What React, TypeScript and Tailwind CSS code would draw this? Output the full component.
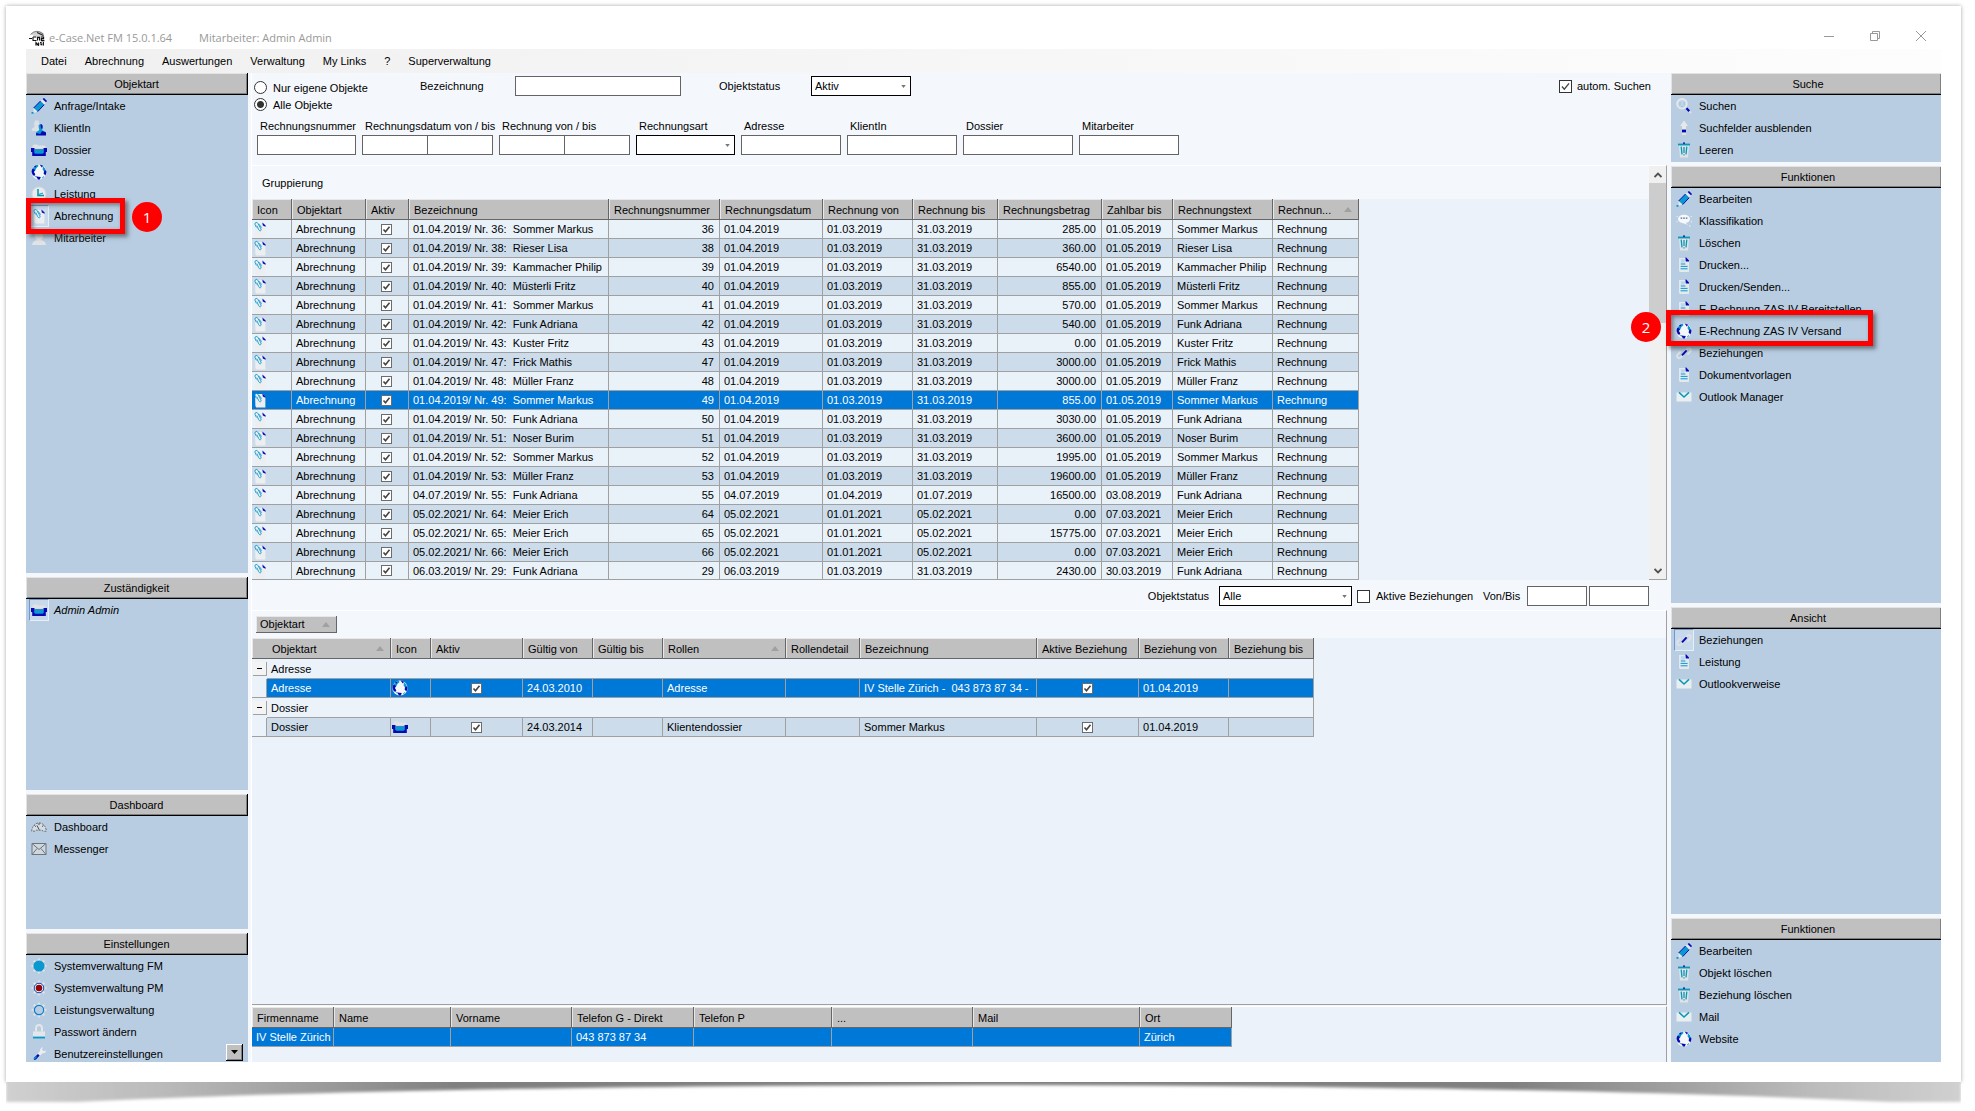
import React from "react";
import clsx from "clsx";

type IconName =
  | "pencil" | "person" | "box" | "globe" | "clock" | "clip" | "staff" | "gauge" | "envelope"
  | "gearBlue" | "gearRed" | "gearRing" | "lock" | "wrench" | "search" | "arrowUp" | "trash"
  | "speech" | "doc" | "link" | "mail";

const gearTeeth = (
  <path
    d="M8 0.5v15M0.5 8h15M2.7 2.7l10.6 10.6M13.3 2.7L2.7 13.3"
    stroke="#dfe0e2"
    strokeWidth="2.4"
  />
);

const drawings: Record<IconName, React.ReactNode> = {
  pencil: (
    <>
      <path d="M9.5 3l3.8 3.6-6.6 7L2.6 10z" fill="#0a98d0" />
      <path d="M9.5 3L2.6 10M13.3 6.6l-6.6 7" stroke="#0508b4" strokeWidth="1" />
      <path d="M9.7 2.8l1.6-1.3 3.6 3.4-1.5 1.6z" fill="#e8e8e8" />
      <path d="M11.6 1L13 0l3 3-1 1.3z" fill="#0508b4" />
      <path d="M2.6 10l3.6 3.5L2.6 15z" fill="#e8e8e8" />
      <path d="M0.5 14h2v1.8h-2z" fill="#0a98d0" />
    </>
  ),
  person: (
    <>
      <path d="M4 0.5h3.5l1 4-1 3.5 1 3H0.5l0.5-2.5 2.5-1.5L3 4z" fill="#dcdfe3" />
      <path d="M7.5 5.5Q9.5 3 11.5 5.5v3L11 10l4 2.2V15H5v-2.5L8.3 10z" fill="#0a98d0" />
      <path d="M9.5 4Q11 4 11.5 5.5v3H10zM11 11l4 1.6V15.5H5L5.3 13l4 1z" fill="#0508b4" />
    </>
  ),
  box: (
    <>
      <path d="M1.5 6V3.8L3 2.6h3l1 0.8h6l1.5 1V6z" fill="#e1e2e4" />
      <path d="M0 6h16v4h-1.2v4H1.2v-4H0z" fill="#0508b4" />
      <path d="M3.6 6h8.8l0.4 1.6H3.2z" fill="#d2dae2" />
      <path d="M3.2 7.6h9.6v3.2l-1.2 1H4.4l-1.2-1z" fill="#0a98d0" />
    </>
  ),
  globe: (
    <>
      <circle cx="8" cy="8" r="7.6" fill="#f4f6f8" />
      <path d="M1.4 5.2Q3 1.4 7 0.7l0.4 1.6-2 1.6-1 2.4-1.6 1.5zM12 2.2l2.2 2.4 0.8 2.6-2 0.4-1.4-2.2z" fill="#0a98d0" />
      <path d="M0.5 8Q0.6 6 1.6 4.6L4 6 2.9 8l1.4 2.2-0.6 1.6-1.9-0.6zM3 2.6L5.4 1.2l-0.6 2.2zM8.6 0.4l3.6 1.3-1.4 1.8zM13.4 6.6l2 0.2q0.4 2.4-1 4.8l-1.8-2zM5 12.2l2.2 0.6 2.6 0.2-1 2.5H7z" fill="#0508b4" />
      <path d="M3 11.6l1.6 0.4L5.6 14zM11.2 13.4l2-1.6-0.6 1.8-1.6 1z" fill="#0a98d0" />
    </>
  ),
  clock: (
    <>
      <circle cx="8" cy="8" r="7" fill="#e9ebed" stroke="#d6d8dc" />
      <path d="M7 3v6.5h6" fill="none" stroke="#0a98a8" strokeWidth="1.6" />
      <path d="M7.5 8.5L12 7" stroke="#0a98d0" />
    </>
  ),
  clip: (
    <>
      <path d="M3 2h8l2.4 2.6V15.4H4.2L3.4 14z" fill="#eceef0" />
      <path d="M10.4 1.4L13.6 4.6v1.2l-2.8-1.4z" fill="#0508b4" />
      <path d="M4.4 6.4L3 3.4Q2.7 1.7 4.2 1.4q1.3 0 2 1.4L9 8q0.4 1.5-0.6 1.8-1 0.2-1.7-1.1L4.8 4.6M7 3.2l2.6 3.4" fill="none" stroke="#0a98d0" strokeWidth="0.9" />
    </>
  ),
  staff: (
    <>
      <circle cx="8" cy="6" r="4" fill="#e1e3e6" />
      <path d="M1 15q0.5-5 7-5t7 5z" fill="#e1e3e6" />
    </>
  ),
  gauge: (
    <>
      <path d="M0.8 12.2Q0.6 9 3.3 6 8 1.8 12.8 6q2.6 3 2.4 6.2h-3l-1.4-1H5.2l-1.4 1z" fill="#d5dce2" stroke="#5d646b" strokeWidth="0.9" strokeDasharray="2 1" />
      <path d="M8 4v2M3.4 6.3l1.5 1.4M12.5 6.3L11 7.7M6 6.4l2.2 4.4" stroke="#4a4f55" />
    </>
  ),
  envelope: (
    <>
      <path d="M1 2.5h14v11H1z" fill="#cfd7de" stroke="#6d747b" />
      <path d="M1 2.5l7 6 7-6M1 13.5l5-6M15 13.5l-5-6" fill="none" stroke="#6d747b" />
    </>
  ),
  gearBlue: (
    <>
      {gearTeeth}
      <circle cx="8" cy="8" r="5.6" fill="#0a98d0" />
    </>
  ),
  gearRed: (
    <>
      {gearTeeth}
      <circle cx="8" cy="8" r="4.8" fill="#f3f5f7" stroke="#0840b8" />
      <circle cx="8" cy="8" r="3.3" fill="#980404" />
    </>
  ),
  gearRing: (
    <>
      {gearTeeth}
      <circle cx="8" cy="8" r="4.6" fill="#b8cde2" stroke="#0a80cc" strokeWidth="1.2" />
    </>
  ),
  lock: (
    <>
      <path d="M5 7.5V4Q5.2 1 8 1t3 3v3.5" fill="none" stroke="#e4e6e8" strokeWidth="2" />
      <path d="M2 7.5h12V15H2z" fill="#e4e6e8" />
      <path d="M2 12.6h12v2H2z" fill="#0a98d0" />
    </>
  ),
  wrench: (
    <>
      <path d="M15.5 4.5q-1 3-4 2.8L8.8 10 6.6 7.8 9 5Q8.8 2 12 1l-1 2.6 1.6 1.6z" fill="#ebedef" />
      <path d="M7 8l1.6 1.6L5 13.4 2.8 14l0.4-2.6z" fill="#0508b4" />
      <path d="M3 13l2.5-2.6" stroke="#0a98d0" strokeWidth="1.4" />
    </>
  ),
  search: (
    <>
      <circle cx="6" cy="5.8" r="4.8" fill="#c3d5e6" stroke="#e6e8ea" strokeWidth="1.8" />
      <path d="M4 4v3.4M8 4v3.4M5 8.3h2" stroke="#8fc6e0" />
      <path d="M10.5 10.2l2.8 3" stroke="#0508b4" strokeWidth="2.2" />
      <path d="M13.4 13.4l1.8 1.8" stroke="#e0e2e4" strokeWidth="1.6" />
    </>
  ),
  arrowUp: (
    <>
      <path d="M8 0.5L12 6h-2v4H6V6H4z" fill="#e6e8ea" />
      <path d="M6 9.6h4v3H6z" fill="#0508b4" />
      <path d="M6 12.6h4V15H6z" fill="#e0e2e4" />
    </>
  ),
  trash: (
    <>
      <path d="M3 3.4h10l-1 12H4z" fill="#dfe3e6" />
      <path d="M2 1.6h12v1.8H2z" fill="#0a98b8" />
      <path d="M7 0.6h2v1.2H7z" fill="#0508b4" />
      <path d="M5.2 4.6L6 12.4M10.8 4.6L10 12.4M8 5v6M7.4 12.8h1.2" stroke="#0a98b8" strokeWidth="1.3" />
    </>
  ),
  speech: (
    <>
      <path d="M2 6q0.4-4 6-4.2 5.6 0.2 6 4.2-0.4 3.6-4.4 4l2.6 2-5-1.8Q2.4 9.6 2 6z" fill="#f6f8fa" />
      <path d="M4.6 5.2h1.6M7.2 5.2h1.6M9.8 5.2h1.6" stroke="#4a6a98" strokeWidth="1.2" />
      <path d="M13 13h1.4M0.6 3.4h1M14.8 3.4h1M0.6 8.8h1M14.8 8.8h1" stroke="#f6f8fa" />
    </>
  ),
  doc: (
    <>
      <path d="M3 1h7l3 3v11H4l-1-1z" fill="#e4e9ed" />
      <path d="M4.8 2.2h4v3.6h-4z" fill="#b8d8f2" />
      <path d="M9.4 0.6h0.8L13 3.6v1H9.8z" fill="#0508b4" />
      <path d="M4.8 7h4.6M4.6 9.4h7M4.6 11.8h7" stroke="#0a98d0" strokeWidth="1" />
    </>
  ),
  link: (
    <>
      <path d="M8.6 6.4L11 3.8q1.8-1.6 3.4 0 1.2 1.6-0.4 3.2L11.4 9.6M7.6 9.6L5 12.4q-1.8 1.6-3.4 0-1.2-1.6 0.4-3.2l2.6-2.6" fill="none" stroke="#dfe2e5" strokeWidth="1.8" />
      <path d="M6 10.4l4.6-5" stroke="#0508b4" strokeWidth="2" />
    </>
  ),
  mail: (
    <>
      <path d="M0.5 3.5h15v9h-15z" fill="#e9eef0" />
      <path d="M3 3.4L8 8l5-4.6" fill="none" stroke="#0a98b8" strokeWidth="1.5" />
    </>
  ),
};

const Icon = ({ name }: { name: IconName }) => (
  <svg viewBox="0 0 16 16" className="block h-4 w-4 shrink-0" fill="none" aria-hidden="true">
    {drawings[name]}
  </svg>
);

const SortMark = () => (
  <svg viewBox="0 0 8 5" className="h-[5px] w-2 shrink-0" aria-hidden="true">
    <path d="M4 0l4 5H0z" fill="#a0a0a0" />
  </svg>
);

interface TickProps {
  id?: string;
  label?: string;
  checked?: boolean;
  small?: boolean;
}

const Tick = ({ id, label, checked, small }: TickProps) => (
  <span className={clsx("relative inline-block shrink-0 align-top", small ? "h-[11px] w-[11px]" : "h-[13px] w-[13px]")}>
    <input
      id={id}
      type="checkbox"
      aria-label={label}
      defaultChecked={checked}
      className={clsx("peer block h-full w-full appearance-none border bg-white", small ? "border-[#6c6c6c]" : "border-[#333]")}
    />
    <svg viewBox="0 0 11 11" className="pointer-events-none absolute inset-0 hidden h-full w-full peer-checked:block" fill="none" aria-hidden="true">
      <path d="M2.5 5.5l2 2.3 4-5" stroke="#444" strokeWidth={small ? 1.6 : 1.1} />
    </svg>
  </span>
);

interface ListItem {
  label: string;
  icon: IconName;
  active?: boolean;
  italic?: boolean;
  step?: number;
}

const StepMark = ({ step }: { step: number }) => (
  <>
    <span
      className={clsx(
        "pointer-events-none absolute z-10 h-9 border-[5px] border-[#fe0000] shadow-[3px_3px_4px_rgba(60,60,60,0.6),inset_2px_2px_4px_rgba(60,60,60,0.6)]",
        step === 1 ? "-top-[7px] left-0 w-[99px]" : "-top-[10px] -left-[5px] w-[207px]"
      )}
    />
    <span
      className={clsx(
        "absolute z-10 flex h-[30px] w-[30px] items-center justify-center rounded-full bg-[#fe0000] font-['Open_Sans',sans-serif] text-[15px] text-white",
        step === 1 ? "-top-[3px] left-[106px]" : "-top-[8px] -left-10"
      )}
    >
      {step}
    </span>
  </>
);

interface PanelProps {
  title: string;
  items: ListItem[];
  className: string;
  side?: "left" | "right";
  children?: React.ReactNode;
}

const Panel = ({ title, items, className, side = "left", children }: PanelProps) => (
  <section className={clsx("relative min-h-0 bg-[#b8cde2]", className)}>
    <h2
      className={clsx(
        "flex h-[22px] items-center justify-center border-b border-black bg-[#c0c0c0]",
        side === "left" ? "border-r" : "pl-1",
        "shadow-[inset_1px_1px_0_#e3e3e3,inset_-1px_-1px_0_#808080]"
      )}
    >
      {title}
    </h2>
    <ul>
      {items.map(({ label, icon, active, italic, step }) => (
        <li key={label} className="relative">
          <button type="button" className="flex h-[22px] w-full items-center gap-[5px] pl-[3px] text-left">
            <span
              className={clsx(
                "flex h-[22px] w-5 items-center justify-center border",
                active ? "border-t-[#6f98cc] border-r-[#e6eef7] border-b-[#e6eef7] border-l-[#6f98cc] bg-[#c8d9ec]" : "border-transparent"
              )}
            >
              <Icon name={icon} />
            </span>
            <span className={clsx("whitespace-nowrap", italic && "italic")}>{label}</span>
          </button>
          {step && <StepMark step={step} />}
        </li>
      ))}
    </ul>
    {children}
  </section>
);

interface FieldProps {
  label: string;
  width: string;
  kind?: "text" | "range" | "select";
}

const inputStyle = "h-5 w-full min-w-0 border border-[#646464] bg-white px-1 outline-none";

const Select = ({ id, options, className }: { id: string; options: string[]; className: string }) => (
  <span className={clsx("relative block", className)}>
    <select id={id} className="h-5 w-full appearance-none border border-black bg-white px-[3px] outline-none">
      {options.map((option) => (
        <option key={option}>{option}</option>
      ))}
    </select>
    <svg viewBox="0 0 6 4" className="pointer-events-none absolute top-[9px] right-[5px] h-[3px] w-[5px]" aria-hidden="true">
      <path d="M0 0h6L3 4z" fill="#777" />
    </svg>
  </span>
);

const Field = ({ label, width, kind = "text" }: FieldProps) => {
  const id = `filter-${label.toLowerCase().replace(/[^a-z]+/g, "-")}`;
  return (
    <div className={clsx("flex flex-col", width)}>
      <label htmlFor={id} className="h-[17px] pl-[3px] leading-[16px] whitespace-nowrap">
        {label}
      </label>
      {kind === "text" && <input id={id} type="text" className={inputStyle} />}
      {kind === "select" && <Select id={id} options={[""]} className="w-full" />}
      {kind === "range" && (
        <div className="flex">
          <input id={id} type="text" className={inputStyle} />
          <input type="text" aria-label={`${label} Ende`} className={clsx(inputStyle, "-ml-px")} />
        </div>
      )}
    </div>
  );
};

const headCell =
  "h-[21px] border-r border-b border-[#666] bg-[#c0c0c0] pt-px pl-[5px] text-left font-normal whitespace-nowrap overflow-hidden shadow-[inset_1px_1px_0_#e8e8e8]";
const bodyCell = "border-r border-b border-[#a0a0a0] pl-1 whitespace-nowrap overflow-hidden";

const Cols = ({ widths }: { widths: number[] }) => (
  <colgroup>
    {widths.map((width, index) => (
      <col key={index} style={{ width }} />
    ))}
  </colgroup>
);

const tableStyle = (widths: number[]) => ({ width: widths.reduce((sum, width) => sum + width, 0) });

// datum, nummer, name, von, bis, betrag, zahlbar bis
const invoices: [string, number, string, string, string, string, string][] = [
  ["01.04.2019", 36, "Sommer Markus", "01.03.2019", "31.03.2019", "285.00", "01.05.2019"],
  ["01.04.2019", 38, "Rieser Lisa", "01.03.2019", "31.03.2019", "360.00", "01.05.2019"],
  ["01.04.2019", 39, "Kammacher Philip", "01.03.2019", "31.03.2019", "6540.00", "01.05.2019"],
  ["01.04.2019", 40, "Müsterli Fritz", "01.03.2019", "31.03.2019", "855.00", "01.05.2019"],
  ["01.04.2019", 41, "Sommer Markus", "01.03.2019", "31.03.2019", "570.00", "01.05.2019"],
  ["01.04.2019", 42, "Funk Adriana", "01.03.2019", "31.03.2019", "540.00", "01.05.2019"],
  ["01.04.2019", 43, "Kuster Fritz", "01.03.2019", "31.03.2019", "0.00", "01.05.2019"],
  ["01.04.2019", 47, "Frick Mathis", "01.03.2019", "31.03.2019", "3000.00", "01.05.2019"],
  ["01.04.2019", 48, "Müller Franz", "01.03.2019", "31.03.2019", "3000.00", "01.05.2019"],
  ["01.04.2019", 49, "Sommer Markus", "01.03.2019", "31.03.2019", "855.00", "01.05.2019"],
  ["01.04.2019", 50, "Funk Adriana", "01.03.2019", "31.03.2019", "3030.00", "01.05.2019"],
  ["01.04.2019", 51, "Noser Burim", "01.03.2019", "31.03.2019", "3600.00", "01.05.2019"],
  ["01.04.2019", 52, "Sommer Markus", "01.03.2019", "31.03.2019", "1995.00", "01.05.2019"],
  ["01.04.2019", 53, "Müller Franz", "01.03.2019", "31.03.2019", "19600.00", "01.05.2019"],
  ["04.07.2019", 55, "Funk Adriana", "01.04.2019", "01.07.2019", "16500.00", "03.08.2019"],
  ["05.02.2021", 64, "Meier Erich", "01.01.2021", "05.02.2021", "0.00", "07.03.2021"],
  ["05.02.2021", 65, "Meier Erich", "01.01.2021", "05.02.2021", "15775.00", "07.03.2021"],
  ["05.02.2021", 66, "Meier Erich", "01.01.2021", "05.02.2021", "0.00", "07.03.2021"],
  ["06.03.2019", 29, "Funk Adriana", "01.03.2019", "31.03.2019", "2430.00", "30.03.2019"],
];

const invoiceHeads = [
  "Icon", "Objektart", "Aktiv", "Bezeichnung", "Rechnungsnummer", "Rechnungsdatum",
  "Rechnung von", "Rechnung bis", "Rechnungsbetrag", "Zahlbar bis", "Rechnungstext",
];
const invoiceWidths = [40, 74, 43, 200, 111, 103, 90, 85, 104, 71, 100, 86];

const InvoiceTable = () => (
  <table className="table-fixed border-separate border-spacing-0" style={tableStyle(invoiceWidths)}>
    <Cols widths={invoiceWidths} />
    <thead>
      <tr>
        {invoiceHeads.map((head) => (
          <th key={head} className={headCell}>{head}</th>
        ))}
        <th className={headCell}>
          <span className="flex items-center justify-between pr-1.5">
            Rechnun...
            <SortMark />
          </span>
        </th>
      </tr>
    </thead>
    <tbody>
      {invoices.map(([date, nr, name, from, to, amount, due]) => (
        <tr
          key={nr}
          className={clsx("h-[19px] last:h-[18px]", nr === 49 ? "bg-[#0078d7] text-white" : "odd:bg-[#e9f1f9] even:bg-[#ccdcea]")}
        >
          <td className="border-r border-b border-[#a0a0a0]"><Icon name="clip" /></td>
          <td className={bodyCell}>Abrechnung</td>
          <td className="border-r border-b border-[#a0a0a0] pr-0.5 text-center leading-none">
            <Tick small checked label={`Rechnung ${nr} aktiv`} />
          </td>
          <td className={clsx(bodyCell, "whitespace-pre")}>{`${date}/ Nr. ${nr}:  ${name}`}</td>
          <td className={clsx(bodyCell, "pr-[5px] text-right")}>{nr}</td>
          <td className={bodyCell}>{date}</td>
          <td className={bodyCell}>{from}</td>
          <td className={bodyCell}>{to}</td>
          <td className={clsx(bodyCell, "pr-[5px] text-right")}>{amount}</td>
          <td className={bodyCell}>{due}</td>
          <td className={bodyCell}>{name}</td>
          <td className={bodyCell}>Rechnung</td>
        </tr>
      ))}
    </tbody>
  </table>
);

interface Relation {
  type: string;
  icon: IconName;
  since: string;
  role: string;
  name: string;
  selected?: boolean;
}

const relations: Relation[] = [
  { type: "Adresse", icon: "globe", since: "24.03.2010", role: "Adresse", name: "IV Stelle Zürich -  043 873 87 34 -", selected: true },
  { type: "Dossier", icon: "box", since: "24.03.2014", role: "Klientendossier", name: "Sommer Markus" },
];

const relationWidths = [15, 124, 40, 92, 70, 70, 123, 74, 177, 102, 90, 85];

const RelationTable = () => (
  <table className="table-fixed border-separate border-spacing-0" style={tableStyle(relationWidths)}>
    <Cols widths={relationWidths} />
    <thead>
      <tr>
        <th colSpan={2} className={headCell}>
          <span className="flex items-center justify-between pr-1.5 pl-[15px]">Objektart <SortMark /></span>
        </th>
        <th className={headCell}>Icon</th>
        <th className={headCell}>Aktiv</th>
        <th className={headCell}>Gültig von</th>
        <th className={headCell}>Gültig bis</th>
        <th className={headCell}>
          <span className="flex items-center justify-between pr-1.5">Rollen <SortMark /></span>
        </th>
        <th className={headCell}>Rollendetail</th>
        <th className={headCell}>Bezeichnung</th>
        <th className={headCell}>Aktive Beziehung</th>
        <th className={headCell}>Beziehung von</th>
        <th className={headCell}>Beziehung bis</th>
      </tr>
    </thead>
    <tbody>
      {relations.map((row) => (
        <React.Fragment key={row.type}>
          <tr className="h-5">
            <td>
              <button
                type="button"
                aria-label={`${row.type} zuklappen`}
                className="ml-px flex h-3.5 w-3.5 items-center justify-center border-r border-b border-[#a0a0a0] bg-[#f4f4f4]"
              >
                <span className="h-px w-[5px] bg-black" />
              </button>
            </td>
            <td colSpan={11} className={bodyCell}>{row.type}</td>
          </tr>
          <tr className="h-[19px]">
            <td className="border-r border-b border-[#a0a0a0]" />
            {[
              row.type,
              <Icon name={row.icon} />,
              <Tick small checked label={`${row.type} aktiv`} />,
              row.since,
              "",
              row.role,
              "",
              row.name,
              <Tick small checked label={`${row.type} aktive Beziehung`} />,
              "01.04.2019",
              "",
            ].map((value, index) => (
              <td
                key={index}
                className={clsx(
                  "border-r border-b border-[#a0a0a0] whitespace-pre",
                  row.selected ? "bg-[#0078d7] text-white" : "bg-[#ccdcea]",
                  index === 2 || index === 8 ? "text-center leading-none" : index === 1 ? "pl-px" : "pl-1"
                )}
              >
                {value}
              </td>
            ))}
          </tr>
        </React.Fragment>
      ))}
    </tbody>
  </table>
);

const contactHeads = ["Firmenname", "Name", "Vorname", "Telefon G - Direkt", "Telefon P", "...", "Mail", "Ort"];
const contactValues = ["IV Stelle Zürich", "", "", "043 873 87 34", "", "", "", "Zürich"];
const contactWidths = [82, 117, 121, 122, 138, 141, 167, 92];

const ContactTable = () => (
  <table className="table-fixed border-separate border-spacing-0" style={tableStyle(contactWidths)}>
    <Cols widths={contactWidths} />
    <thead>
      <tr>
        {contactHeads.map((head) => (
          <th key={head} className={headCell}>{head}</th>
        ))}
      </tr>
    </thead>
    <tbody>
      <tr className="h-[19px] bg-[#0078d7] text-white">
        {contactValues.map((value, index) => (
          <td key={index} className={bodyCell}>{value}</td>
        ))}
      </tr>
    </tbody>
  </table>
);

const TitleBar = () => (
  <header className="flex h-[23px] items-center pl-[3px] font-['Open_Sans',sans-serif] text-[11px] text-[#999]">
    <svg viewBox="0 0 16 16" className="h-4 w-4 shrink-0" fill="none" aria-hidden="true">
      <path d="M2 4Q7-1.5 13.5 2.5L15 5v10.5H6V13h9" fill="#d4d4d4" />
      <path d="M1.5 4.5Q7-1.5 14.5 4" stroke="#777" strokeWidth="1" />
      <path d="M8 2.5l6.5 3" stroke="#222" strokeWidth="1.2" />
      <path d="M0 8.5h3M4 7v3.5h3.5M4 7h3M8.5 10.5V7.4h2v3M12 7h2.6v1.6H12.4v2h3" stroke="#111" strokeWidth="1.1" />
      <path d="M7 15.5v-3l2.4 3v-3M11 12.5h1.6M11 14h1.6v1.3M14.4 12v3.5" stroke="#111" strokeWidth="1.1" />
    </svg>
    <h1 className="ml-1 w-[150px] whitespace-nowrap">e-Case.Net FM 15.0.1.64</h1>
    <span>Mitarbeiter: Admin Admin</span>
    <div className="-mt-[3px] -mr-[3px] ml-auto flex">
      <button type="button" aria-label="Minimieren" className="flex h-5 w-[46px] items-center justify-center">
        <svg viewBox="0 0 10 10" className="h-2.5 w-2.5" stroke="#999"><path d="M0 5.5h10" /></svg>
      </button>
      <button type="button" aria-label="Verkleinern" className="flex h-5 w-[46px] items-center justify-center">
        <svg viewBox="0 0 10 10" className="h-2.5 w-2.5" stroke="#999" fill="none"><path d="M0.5 2.5h7v7h-7zM2.5 2.5v-2h7v7h-2" /></svg>
      </button>
      <button type="button" aria-label="Schliessen" className="flex h-5 w-[46px] items-center justify-center">
        <svg viewBox="0 0 10 10" className="h-2.5 w-2.5" stroke="#999"><path d="M0 0l10 10M10 0L0 10" /></svg>
      </button>
    </div>
  </header>
);

const menu = ["Datei", "Abrechnung", "Auswertungen", "Verwaltung", "My Links", "?", "Superverwaltung"];

const FilterBar = () => (
  <form className="pb-[10px]">
    <div className="flex items-start pl-0.5">
      <div className="w-[166px] pt-1.5">
        {["Nur eigene Objekte", "Alle Objekte"].map((label, index) => (
          <label key={label} className="flex h-[17px] items-center gap-1.5">
            <input
              type="radio"
              name="scope"
              defaultChecked={index === 1}
              className="h-[13px] w-[13px] appearance-none rounded-full border border-[#333] bg-white checked:bg-[radial-gradient(circle,#333_3px,#fff_4px)]"
            />
            {label}
          </label>
        ))}
      </div>
      <div className="flex flex-1 items-center pt-[3px]">
        <label htmlFor="bezeichnung" className="w-[95px]">Bezeichnung</label>
        <span className="w-[166px]"><input id="bezeichnung" type="text" className={clsx(inputStyle, "block")} /></span>
        <label htmlFor="objektstatus" className="ml-[38px] w-[92px]">Objektstatus</label>
        <Select id="objektstatus" options={["Aktiv", "Inaktiv", "Alle"]} className="w-[100px]" />
        <label className="mr-4 ml-auto flex items-center gap-[5px]">
          <Tick checked />
          autom. Suchen
        </label>
      </div>
    </div>
    <div className="mt-[5px] flex gap-1.5 pl-[5px]">
      <Field label="Rechnungsnummer" width="w-[99px]" />
      <Field label="Rechnungsdatum von / bis" width="w-[131px]" kind="range" />
      <Field label="Rechnung von / bis" width="w-[131px]" kind="range" />
      <Field label="Rechnungsart" width="w-[99px]" kind="select" />
      <Field label="Adresse" width="w-[100px]" />
      <Field label="KlientIn" width="w-[110px]" />
      <Field label="Dossier" width="w-[110px]" />
      <Field label="Mitarbeiter" width="w-[100px]" />
    </div>
  </form>
);

const ScrollBar = () => (
  <div className="flex w-[17px] flex-col bg-[#f0f0f0]">
    <button type="button" aria-label="Nach oben" className="flex h-[17px] items-center justify-center">
      <svg viewBox="0 0 8 6" className="h-1.5 w-2" fill="none" stroke="#505050" strokeWidth="1.8"><path d="M0.5 5L4 1.5 7.5 5" /></svg>
    </button>
    <div className="flex-1"><div className="h-[37%] bg-[#cdcdcd]" /></div>
    <button type="button" aria-label="Nach unten" className="flex h-[17px] items-center justify-center">
      <svg viewBox="0 0 8 6" className="h-1.5 w-2" fill="none" stroke="#505050" strokeWidth="1.8"><path d="M0.5 1L4 4.5 7.5 1" /></svg>
    </button>
  </div>
);

const Workspace = () => (
  <main className="flex min-w-0 flex-1 flex-col border-l border-white">
    <FilterBar />
    <div className="flex border-t border-r border-b border-t-white border-r-[#a0a0a0] border-b-[#a0a0a0]">
      <div className="-mb-px min-w-0 flex-1 bg-[#ebf2fa]">
        <div className="flex h-[33px] items-center bg-[#f4f8fc] pl-2.5">Gruppierung</div>
        <InvoiceTable />
      </div>
      <ScrollBar />
    </div>
    <div className="flex h-[30px] items-center justify-end pt-0.5 pr-[18px]">
      <label htmlFor="status-beziehung" className="mr-2.5">Objektstatus</label>
      <Select id="status-beziehung" options={["Alle", "Aktiv"]} className="mr-[5px] w-[133px]" />
      <label className="flex w-[126px] items-center gap-1.5 whitespace-nowrap">
        <Tick />
        Aktive Beziehungen
      </label>
      <label htmlFor="von" className="w-11">Von/Bis</label>
      <span className="flex w-[122px] gap-0.5">
        <input id="von" type="text" className={inputStyle} />
        <input type="text" aria-label="Bis" className={inputStyle} />
      </span>
    </div>
    <div className="flex-1 border-t border-r border-b border-t-white border-r-[#a0a0a0] border-b-[#a0a0a0] bg-[#ebf2fa]">
      <div className="flex h-[27px] items-center bg-[#f4f8fc] pl-1">
        <button
          type="button"
          className="flex h-[17px] w-[81px] items-center justify-between border-r border-b border-[#666] bg-[#c0c0c0] pr-1.5 pl-1 shadow-[inset_1px_1px_0_#e8e8e8]"
        >
          Objektart <SortMark />
        </button>
      </div>
      <RelationTable />
    </div>
    <div className="mt-px h-[56px] border-t border-r border-t-white border-r-[#a0a0a0] bg-[#ebf2fa]">
      <ContactTable />
    </div>
  </main>
);

const PageCurl = () => (
  <svg
    viewBox="0 0 1955 26"
    preserveAspectRatio="none"
    className="pointer-events-none absolute top-full left-0 h-[26px] w-full"
    aria-hidden="true"
  >
    <defs>
      <linearGradient id="curl">
        <stop offset="0" stopColor="#d0d0d0" />
        <stop offset="0.08" stopColor="#bababa" />
        <stop offset="0.23" stopColor="#808080" />
        <stop offset="0.77" stopColor="#808080" />
        <stop offset="0.92" stopColor="#bababa" />
        <stop offset="1" stopColor="#d0d0d0" />
      </linearGradient>
      <filter id="soft" x="-1%" y="-20%" width="102%" height="140%">
        <feGaussianBlur stdDeviation="1.5" />
      </filter>
    </defs>
    <path d="M0 -4H1955V20H1885Q1560 4 977 3 395 4 70 20H0z" fill="url(#curl)" filter="url(#soft)" />
  </svg>
);

export default function App() {
  return (
    <div className="flex min-h-screen bg-white pt-[6px] pr-[14px] pb-[29px] pl-[6px] font-['Liberation_Sans',Arial,sans-serif] text-[11px] leading-[14px] text-black">
      <div className="relative flex flex-1 flex-col bg-white px-5 py-5 shadow-[0_0_4px_rgba(0,0,0,0.35)]">
        <PageCurl />
        <TitleBar />
        <nav className="flex h-6 items-center gap-[18px] bg-linear-to-r from-[#f0f0f0] to-[#fdfdfd] pl-[15px]">
          {menu.map((entry) => (
            <button key={entry} type="button">{entry}</button>
          ))}
        </nav>
        <div className="flex flex-1 bg-[#f4f8fc]">
          <aside className="mr-[3px] flex w-[222px] shrink-0 flex-col gap-1">
            <Panel
              title="Objektart"
              className="flex-[500]"
              items={[
                { label: "Anfrage/Intake", icon: "pencil" },
                { label: "KlientIn", icon: "person" },
                { label: "Dossier", icon: "box" },
                { label: "Adresse", icon: "globe" },
                { label: "Leistung", icon: "clock" },
                { label: "Abrechnung", icon: "clip", active: true, step: 1 },
                { label: "Mitarbeiter", icon: "staff" },
              ]}
            />
            <Panel
              title="Zuständigkeit"
              className="flex-[213]"
              items={[{ label: "Admin Admin", icon: "box", active: true, italic: true }]}
            />
            <Panel
              title="Dashboard"
              className="flex-[135]"
              items={[
                { label: "Dashboard", icon: "gauge" },
                { label: "Messenger", icon: "envelope" },
              ]}
            />
            <Panel
              title="Einstellungen"
              className="flex-[129] overflow-hidden"
              items={[
                { label: "Systemverwaltung FM", icon: "gearBlue" },
                { label: "Systemverwaltung PM", icon: "gearRed" },
                { label: "Leistungsverwaltung", icon: "gearRing" },
                { label: "Passwort ändern", icon: "lock" },
                { label: "Benutzereinstellungen", icon: "wrench" },
              ]}
            >
              <button
                type="button"
                aria-label="Weitere Einstellungen"
                className="absolute right-[5px] bottom-px flex h-[17px] w-[17px] items-center justify-center border-r border-b border-black bg-[#c0c0c0] shadow-[inset_1px_1px_0_#fff,inset_-1px_-1px_0_#808080]"
              >
                <svg viewBox="0 0 7 4" className="h-1 w-[7px]"><path d="M0 0h7L3.5 4z" /></svg>
              </button>
            </Panel>
          </aside>

          <Workspace />

          <aside className="ml-1 flex w-[270px] shrink-0 flex-col gap-1">
            <Panel
              side="right"
              title="Suche"
              className="flex-[89]"
              items={[
                { label: "Suchen", icon: "search" },
                { label: "Suchfelder ausblenden", icon: "arrowUp" },
                { label: "Leeren", icon: "trash" },
              ]}
            />
            <Panel
              side="right"
              title="Funktionen"
              className="flex-[437]"
              items={[
                { label: "Bearbeiten", icon: "pencil" },
                { label: "Klassifikation", icon: "speech" },
                { label: "Löschen", icon: "trash" },
                { label: "Drucken...", icon: "doc" },
                { label: "Drucken/Senden...", icon: "doc" },
                { label: "E-Rechnung ZAS IV Bereitstellen", icon: "doc" },
                { label: "E-Rechnung ZAS IV Versand", icon: "globe", step: 2 },
                { label: "Beziehungen", icon: "link" },
                { label: "Dokumentvorlagen", icon: "doc" },
                { label: "Outlook Manager", icon: "mail" },
              ]}
            />
            <Panel
              side="right"
              title="Ansicht"
              className="flex-[307]"
              items={[
                { label: "Beziehungen", icon: "link", active: true },
                { label: "Leistung", icon: "doc" },
                { label: "Outlookverweise", icon: "mail" },
              ]}
            />
            <Panel
              side="right"
              title="Funktionen"
              className="flex-[144]"
              items={[
                { label: "Bearbeiten", icon: "pencil" },
                { label: "Objekt löschen", icon: "trash" },
                { label: "Beziehung löschen", icon: "trash" },
                { label: "Mail", icon: "mail" },
                { label: "Website", icon: "globe" },
              ]}
            />
          </aside>
        </div>
      </div>
    </div>
  );
}
